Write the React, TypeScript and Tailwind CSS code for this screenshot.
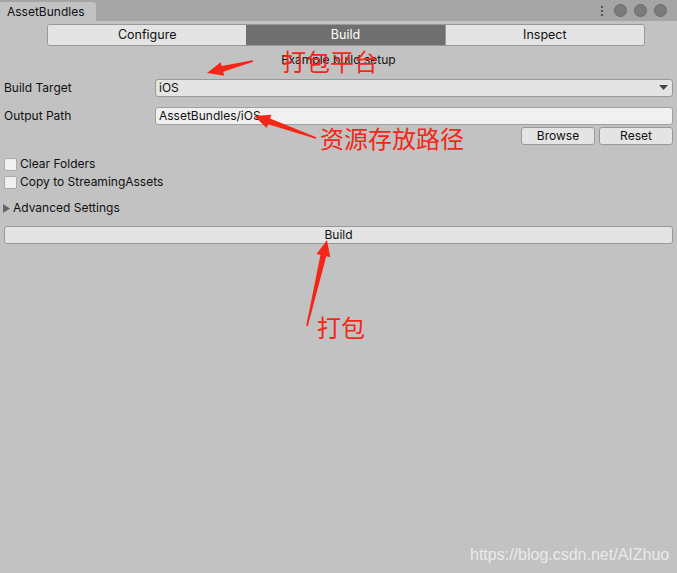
import React from 'react';

const font = { fontFamily: '"Inter", "Liberation Sans", sans-serif' };
const cjk = { fontFamily: '"Noto Sans CJK SC", "Noto Sans", sans-serif' };

const Arrow: React.FC<{ x1: number; y1: number; x2: number; y2: number }> = ({ x1, y1, x2, y2 }) => {
  const dx = x2 - x1;
  const dy = y2 - y1;
  const len = Math.hypot(dx, dy);
  const ux = dx / len;
  const uy = dy / len;
  const px = -uy;
  const py = ux;
  const head = 16;
  const bx = x2 - ux * head;
  const by = y2 - uy * head;
  const pts = [
    [x1 + px * 0.8, y1 + py * 0.8],
    [bx + px * 3, by + py * 3],
    [bx + px * 7, by + py * 7],
    [x2, y2],
    [bx - px * 7, by - py * 7],
    [bx - px * 3, by - py * 3],
    [x1 - px * 0.8, y1 - py * 0.8],
  ]
    .map((p) => p.join(','))
    .join(' ');
  return <polygon points={pts} fill="#f42618" />;
};

export default function App() {
  return (
    <div className="relative w-[677px] h-[573px] bg-[#c2c2c2] text-[12px] text-[#101010] overflow-hidden" style={font}>
      {/* title bar */}
      <div className="h-[21px] bg-[#a5a5a5] flex items-end justify-between">
        <div className="h-[19px] w-[96px] bg-[#c2c2c2] rounded-tr-[3px] flex items-center pl-[7px] text-[12px]">AssetBundles</div>
        <div className="flex items-center gap-[7px] pr-[10px] self-center">
          <div className="flex flex-col gap-[2px] mr-[4px]">
            <div className="w-[2px] h-[2px] bg-[#555]" />
            <div className="w-[2px] h-[2px] bg-[#555]" />
            <div className="w-[2px] h-[2px] bg-[#555]" />
          </div>
          <div className="w-[13px] h-[13px] rounded-full bg-[#7b7b7b] border border-[#6a6a6a]" />
          <div className="w-[13px] h-[13px] rounded-full bg-[#7b7b7b] border border-[#6a6a6a]" />
          <div className="w-[13px] h-[13px] rounded-full bg-[#7b7b7b] border border-[#6a6a6a]" />
        </div>
      </div>

      {/* toolbar */}
      <div className="flex justify-start pl-[47px] pt-[3px]">
        <div className="flex w-[598px] h-[22px] rounded-[3px] overflow-hidden border border-[#999] text-[12.5px]">
          <div className="flex-1 bg-[#e4e4e4] flex items-center justify-center">Configure</div>
          <div className="flex-1 bg-[#6f6f6f] text-white flex items-center justify-center">Build</div>
          <div className="flex-1 bg-[#e4e4e4] flex items-center justify-center border-l border-[#999]">Inspect</div>
        </div>
      </div>

      <div className="text-center mt-[5px] h-[18px] leading-[18px]">Example build setup</div>

      {/* fields */}
      <div className="flex items-center mt-[10px] h-[18px] px-[4px]">
        <div className="w-[151px]">Build Target</div>
        <div className="flex-1 h-[18px] bg-[#e4e4e4] border border-[#999] rounded-[3px] flex items-center justify-between pl-[3px] pr-[4px]">
          <span>iOS</span>
          <svg width="9" height="6" viewBox="0 0 9 6"><polygon points="0,0 9,0 4.5,5" fill="#444" /></svg>
        </div>
      </div>
      <div className="flex items-center mt-[10px] h-[18px] px-[4px]">
        <div className="w-[151px]">Output Path</div>
        <div className="flex-1 h-[18px] bg-[#f0f0f0] border border-[#a0a0a0] rounded-[3px] flex items-center pl-[3px]">AssetBundles/iOS</div>
      </div>
      <div className="flex justify-end gap-[4px] mt-[2px] px-[4px]">
        <div className="w-[74px] h-[18px] bg-[#e4e4e4] border border-[#999] rounded-[3px] flex items-center justify-center">Browse</div>
        <div className="w-[74px] h-[18px] bg-[#e4e4e4] border border-[#999] rounded-[3px] flex items-center justify-center">Reset</div>
      </div>

      <div className="flex flex-col gap-[4px] mt-[12px] px-[4px]">
        <div className="flex items-center gap-[3px] h-[14px]">
          <div className="w-[13px] h-[13px] bg-[#f0f0f0] border border-[#aaa] rounded-[2px]" />
          <span>Clear Folders</span>
        </div>
        <div className="flex items-center gap-[3px] h-[14px]">
          <div className="w-[13px] h-[13px] bg-[#f0f0f0] border border-[#aaa] rounded-[2px]" />
          <span>Copy to StreamingAssets</span>
        </div>
      </div>

      <div className="flex items-center gap-[3px] mt-[11px] px-[3px] h-[16px]">
        <svg width="7" height="9" viewBox="0 0 7 9"><polygon points="0,0 7,4.5 0,9" fill="#666" /></svg>
        <span>Advanced Settings</span>
      </div>

      <div className="mx-[4px] mt-[10px] h-[18px] bg-[#e4e4e4] border border-[#999] rounded-[3px] flex items-center justify-center">Build</div>

      {/* annotations */}
      <div className="absolute left-[282px] top-[47px] text-[24px] leading-[28px] text-[#f42618]" style={cjk}>打包平台</div>
      <div className="absolute left-[320px] top-[124px] text-[24px] leading-[28px] text-[#f42618]" style={cjk}>资源存放路径</div>
      <div className="absolute left-[317px] top-[313px] text-[24px] leading-[28px] text-[#f42618]" style={cjk}>打包</div>
      <svg className="absolute left-0 top-0" width="677" height="573">
        <Arrow x1={253} y1={61} x2={207} y2={73} />
        <Arrow x1={316} y1={138} x2={254} y2={116} />
        <Arrow x1={307} y1={326} x2={327} y2={240} />
      </svg>

      <div className="absolute left-[470px] top-[543px] text-[16px] text-[#eaeaea]" style={{ fontFamily: '"Liberation Sans", sans-serif' }}>https://blog.csdn.net/AIZhuo</div>
    </div>
  );
}
